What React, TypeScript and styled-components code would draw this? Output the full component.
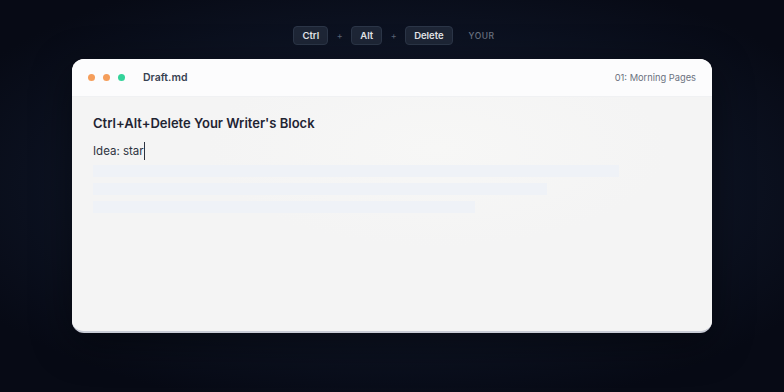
import React from 'react'
import styled, { createGlobalStyle } from 'styled-components'

const GlobalStyle = createGlobalStyle`
  html, body {
    margin: 0;
    padding: 0;
    width: 100%;
    height: 100%;
  }
  body {
    font-family: Inter, "Noto Sans", "Liberation Sans", sans-serif;
    background: #070b16;
  }
  #root {
    height: 100%;
  }
`

const Stage = styled.div`
  width: 784px;
  height: 392px;
  box-sizing: border-box;
  padding-top: 26px;
  display: flex;
  flex-direction: column;
  align-items: center;
  background:
    radial-gradient(ellipse 62% 58% at 50% 48%, #141d30 0%, #0e1526 55%, #070a15 100%);
  overflow: hidden;
`

const Combo = styled.div`
  display: flex;
  align-items: center;
  height: 19px;
  margin-left: 4px;
`

const Key = styled.span`
  height: 19px;
  box-sizing: border-box;
  padding: 0 8px;
  display: inline-flex;
  align-items: center;
  border-radius: 4px;
  background: #1e2636;
  border: 1px solid #2c3648;
  color: #e5e7eb;
  font-size: 9.5px;
  font-weight: 600;
`

const Plus = styled.span`
  color: #5b6477;
  font-size: 9px;
  width: 23px;
  text-align: center;
`

const Word = styled.span`
  margin-left: 16px;
  color: #6b7280;
  font-size: 8.5px;
  font-weight: 500;
  letter-spacing: 0.5px;
`

const Window = styled.div`
  margin-top: 14px;
  width: 640px;
  height: 274px;
  border-radius: 12px;
  overflow: hidden;
  display: flex;
  flex-direction: column;
  background: #f4f4f4;
  border-bottom: 2px solid #c9ccd6;
  box-sizing: border-box;
  box-shadow: 0 10px 40px rgba(0, 0, 0, 0.45);
`

const TitleBar = styled.div`
  height: 37px;
  flex: none;
  display: flex;
  align-items: center;
  padding: 0 16px 0 16px;
  background: #fcfcfd;
  border-bottom: 1px solid #f0f1f3;
`

const Dots = styled.div`
  display: flex;
  gap: 8px;
`

const Dot = styled.span<{ $color: string }>`
  width: 7px;
  height: 7px;
  border-radius: 50%;
  background: ${p => p.$color};
`

const FileName = styled.span`
  margin-left: 18px;
  color: #374151;
  font-size: 10.5px;
  font-weight: 600;
`

const Session = styled.span`
  margin-left: auto;
  color: #6b7280;
  font-size: 9.3px;
`

const Body = styled.div`
  flex: 1;
  padding: 17px 21px 0;
  display: flex;
  flex-direction: column;
  background:
    radial-gradient(ellipse 36% 42% at 57% 22%, #f7f7f6 0%, #f4f4f4 100%);
`

const Heading = styled.h1`
  margin: 0;
  font-size: 13px;
  font-weight: 600;
  color: #1f2433;
  line-height: 18px;
`

const Line = styled.p`
  margin: 10px 0 0;
  font-size: 11.5px;
  color: #2d3340;
  line-height: 18px;
  display: flex;
  align-items: center;
`

const Caret = styled.span`
  display: inline-block;
  width: 1px;
  height: 18px;
  background: #2d3340;
  margin-left: 0.5px;
`

const Skeleton = styled.div`
  margin-top: 5px;
  display: flex;
  flex-direction: column;
  gap: 6px;
`

const Bar = styled.div<{ $width: number }>`
  height: 12px;
  width: ${p => p.$width}px;
  background: #eff2f7;
`

export default function App() {
  return (
    <>
      <GlobalStyle />
      <Stage>
        <Combo>
          <Key>Ctrl</Key>
          <Plus>+</Plus>
          <Key>Alt</Key>
          <Plus>+</Plus>
          <Key>Delete</Key>
          <Word>YOUR</Word>
        </Combo>
        <Window>
          <TitleBar>
            <Dots>
              <Dot $color="#f59e5b" />
              <Dot $color="#f59e5b" />
              <Dot $color="#34d39a" />
            </Dots>
            <FileName>Draft.md</FileName>
            <Session>01: Morning Pages</Session>
          </TitleBar>
          <Body>
            <Heading>Ctrl+Alt+Delete Your Writer's Block</Heading>
            <Line>
              Idea: star
              <Caret />
            </Line>
            <Skeleton>
              <Bar $width={526} />
              <Bar $width={454} />
              <Bar $width={382} />
            </Skeleton>
          </Body>
        </Window>
      </Stage>
    </>
  )
}
